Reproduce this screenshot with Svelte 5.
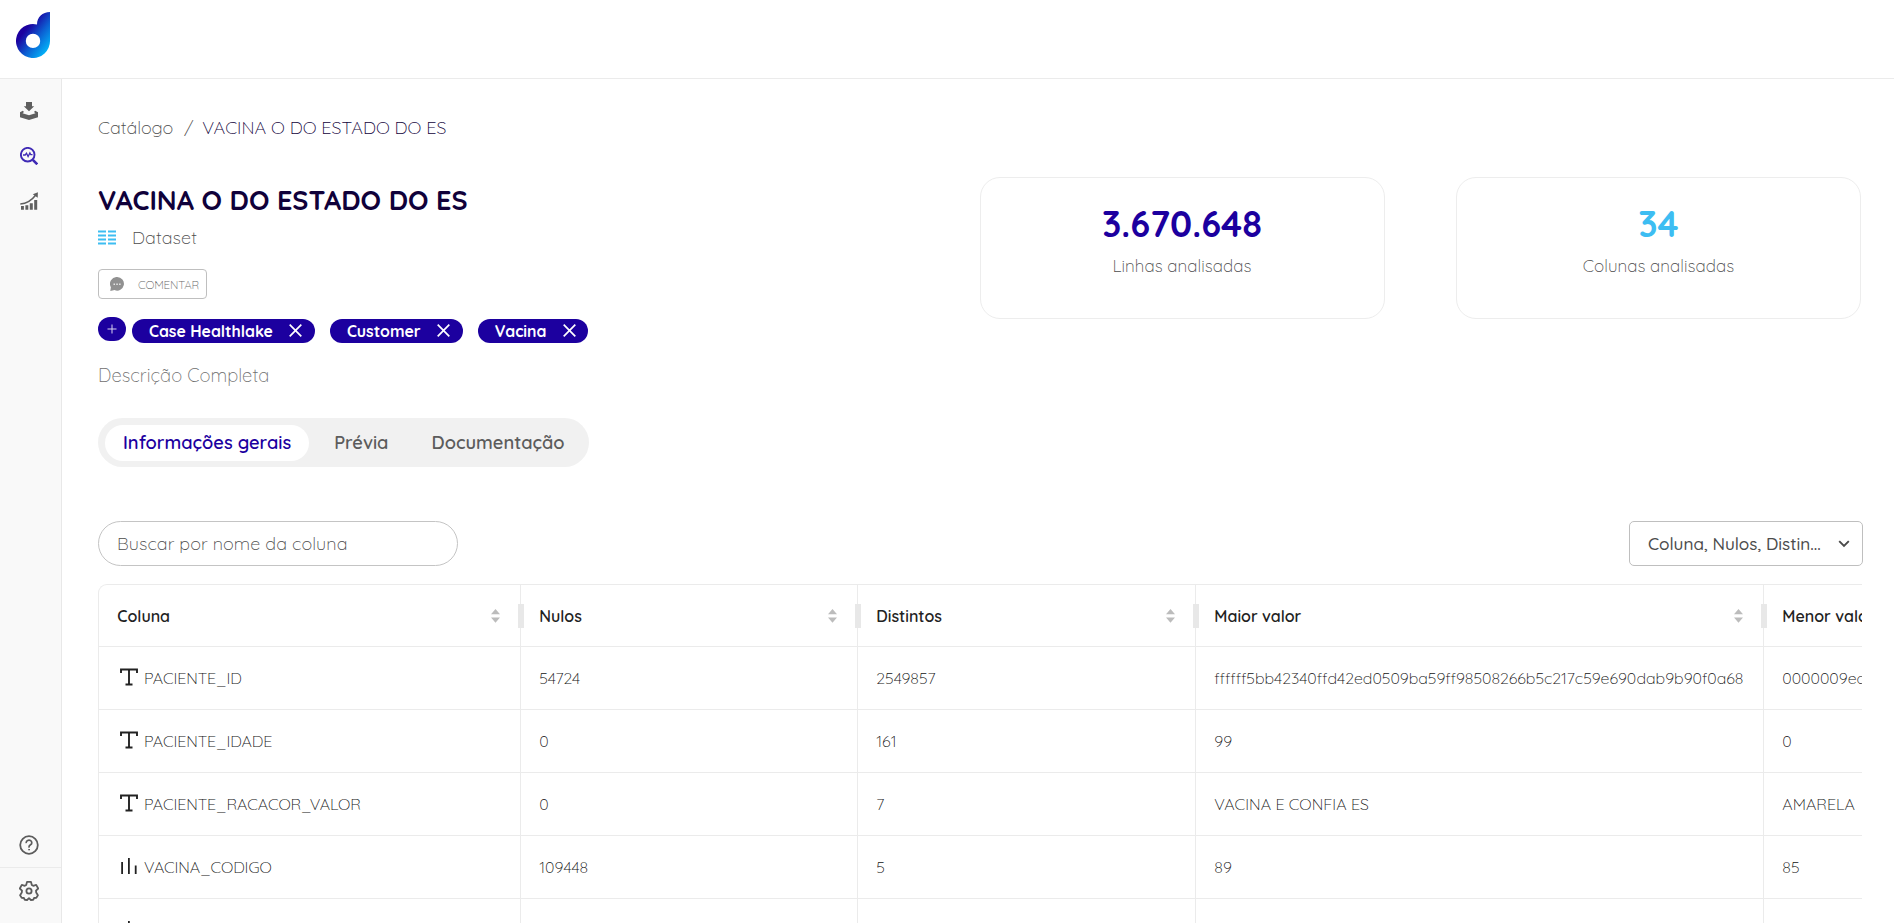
<script lang="ts">
  type Row = { kind: "text" | "number"; cells: string[] };

  const stats = [
    { value: "3.670.648", label: "Linhas analisadas", tone: "navy" },
    { value: "34", label: "Colunas analisadas", tone: "sky" },
  ];

  const headers = ["Coluna", "Nulos", "Distintos", "Maior valor", "Menor valor"];

  const rows: Row[] = [
    { kind: "text", cells: ["PACIENTE_ID", "54724", "2549857", "ffffff5bb42340ffd42ed0509ba59ff98508266b5c217c59e690dab9b90f0a68", "0000009ec"] },
    { kind: "text", cells: ["PACIENTE_IDADE", "0", "161", "99", "0"] },
    { kind: "text", cells: ["PACIENTE_RACACOR_VALOR", "0", "7", "VACINA E CONFIA ES", "AMARELA"] },
    { kind: "number", cells: ["VACINA_CODIGO", "109448", "5", "89", "85"] },
    { kind: "number", cells: ["", "", "", "", ""] },
  ];

  const tabs = ["Informações gerais", "Prévia", "Documentação"];
  let activeTab = $state(0);
  let tags = $state(["Case Healthlake", "Customer", "Vacina"]);
  let search = $state("");

  function removeTag(tag: string) {
    tags = tags.filter((t) => t !== tag);
  }
</script>

<div class="app">
  <header class="topbar">
    <svg class="logo" viewBox="0 0 34 46" width="34" height="46">
      <defs>
        <linearGradient id="brand" gradientUnits="userSpaceOnUse" x1="4" y1="22" x2="30" y2="42">
          <stop offset="0.05" stop-color="#1c009f" />
          <stop offset="0.5" stop-color="#0c5fd2" />
          <stop offset="1" stop-color="#02b8fa" />
        </linearGradient>
      </defs>
      <path
        fill="url(#brand)"
        fill-rule="evenodd"
        d="M34 0v29a17 17 0 1 1-13-16.500C21 5 26.500 0 34 0zM17 21.700a7.200 7.200 0 1 0 0 14.400 7.200 7.200 0 0 0 0-14.400z"
      />
    </svg>
  </header>

  <div class="body">
    <nav class="sidebar">
      <button class="nav" aria-label="Importar">
        <svg viewBox="0 0 18 18" width="18" height="18" fill="#5f5f5f">
          <path d="M6 0h6v4.200h2.200L9 9.200 3.800 4.200H6z" />
          <path d="M2.800 8.800 0 10.200v5L9 18l9-2.800v-5l-2.800-1.400-1.200 1.200 1.500 1.200L9 13.200l-6.500-2L4 10z" />
        </svg>
      </button>
      <button class="nav" aria-label="Catálogo">
        <svg viewBox="0 0 18 18" width="18" height="18" fill="none" stroke="#3f2ab5">
          <circle cx="7.700" cy="7.700" r="6.800" stroke-width="1.900" />
          <path d="M12.800 12.800 17.300 17.300" stroke-width="2.600" />
          <path d="M3 8h2.200l1.300-1.800 1.600 3.300L9.900 6l.9 1.700h1.700" stroke-width="1.300" />
        </svg>
      </button>
      <button class="nav" aria-label="Indicadores">
        <svg viewBox="0 0 18 18" width="18" height="18" fill="#5f5f5f">
          <path d="M1 14h2.900v3.700H1zM5.400 13.300h2.900v4.400H5.400zM9.800 11.300h3v6.400h-3zM14.200 8h3v9.700h-3z" />
          <path d="M.3 12C6.500 11.600 11.600 8.500 16 2.700" fill="none" stroke="#5f5f5f" stroke-width="1.500" />
          <path d="M12.800 2.200 17.900.2 17.700 5.700z" />
        </svg>
      </button>

      <button class="nav help" aria-label="Ajuda">
        <svg viewBox="0 0 20 20" width="20" height="20" fill="none" stroke="#5c5c5c" stroke-width="1.800" stroke-linecap="round">
          <circle cx="10" cy="10" r="8.800" />
          <path d="M7.200 7.500a2.800 2.500 0 1 1 4.300 2.300C10.400 10.500 10 10.800 10 11.900" stroke-width="1.700" />
          <circle cx="10" cy="14.700" r=".5" stroke-width="1" />
        </svg>
      </button>
      <button class="nav settings" aria-label="Configurações">
        <svg viewBox="0 0 20 20" width="20" height="20" fill="none" stroke="#5c5c5c" stroke-width="1.800" stroke-linejoin="round">
          <path d="M8 .9h4l.8 3.100 1.400.8 3-.9 2 3.600-2.200 2.200.2 1.800 1.700 2.700-1.600 2.700-2.200.1-.9 1.900-2.300.1L10 17.200 8.100 19l-2.300-.1-.9-1.900-2.200-.1-1.600-2.700 1.700-2.700.2-1.800L.8 7.500l2-3.600 3 .9L7.200 4z" />
          <circle cx="10" cy="10" r="2.600" />
        </svg>
      </button>
    </nav>

    <main>
      <div class="crumbs">
        <a href="#catalogo">Catálogo</a>
        <span class="slash">/</span>
        <span class="here">VACINA O DO ESTADO DO ES</span>
      </div>

      <section class="summary">
        <div class="about">
          <h1>VACINA O DO ESTADO DO ES</h1>

          <div class="type">
            <svg viewBox="0 0 18 15" width="18" height="15" fill="#3dbdf2">
              <path d="M0 .5h8v2H0zM0 4.500h8v2H0zM0 8.500h8v2H0zM0 12.500h8v2H0zM10 .5h8v2h-8zM10 4.500h8v2h-8zM10 8.500h8v2h-8zM10 12.500h8v2h-8z" />
            </svg>
            <span>Dataset</span>
          </div>

          <button class="comment">
            <svg viewBox="0 0 14 14" width="14" height="14">
              <path fill="#919191" d="M7.200 0a6.800 6.800 0 1 1-2.600 13.100L.3 14l.6-3.800A6.800 6.800 0 0 1 7.200 0z" />
              <path fill="#e6e6e6" d="M3.500 6.500h1.500V8H3.500zM6.300 6.500h1.500V8H6.300zM9.100 6.500h1.500V8H9.100z" />
            </svg>
            <span>COMENTAR</span>
          </button>

          <div class="tags">
            <button class="add" aria-label="Adicionar tag">
              <svg viewBox="0 0 10 10" width="10" height="10" stroke="#d9d4f0" stroke-width="1"><path d="M5 .5v9M.5 5h9" /></svg>
            </button>
            {#each tags as tag}
              <span class="tag">
                <span>{tag}</span>
                <button aria-label="Remover {tag}" onclick={() => removeTag(tag)}>
                  <svg viewBox="0 0 13 13" width="13" height="13" stroke="#fff" stroke-width="1.700"><path d="M.7.7l11.600 11.600M12.300.7.7 12.300" /></svg>
                </button>
              </span>
            {/each}
          </div>

          <p class="description">Descrição Completa</p>

          <div class="tabs">
            {#each tabs as tab, i}
              <button class:active={activeTab === i} onclick={() => (activeTab = i)}>{tab}</button>
            {/each}
          </div>
        </div>

        <div class="stats">
          {#each stats as stat}
            <div class="stat">
              <strong class={stat.tone}>{stat.value}</strong>
              <span>{stat.label}</span>
            </div>
          {/each}
        </div>
      </section>

      <div class="tools">
        <input bind:value={search} placeholder="Buscar por nome da coluna" />
        <button class="select">
          <span>Coluna, Nulos, Distin...</span>
          <svg viewBox="0 0 12 8" width="12" height="8" fill="none" stroke="#4a4a4a" stroke-width="1.900"><path d="M1.200 1.200 6 6l4.800-4.800" /></svg>
        </button>
      </div>

      <div class="grid">
        <div class="row head">
          {#each headers as header}
            <div class="cell">
              <span>{header}</span>
              <svg class="sort" viewBox="0 0 9 14" width="9" height="14" fill="#bcbcbc">
                <path d="M4.500 0 9 5.300H0zM0 8.500h9L4.500 13.800z" />
              </svg>
              <i class="resizer"></i>
            </div>
          {/each}
        </div>
        {#each rows as row}
          <div class="row">
            {#each row.cells as value, i}
              <div class="cell" class:name={i === 0}>
                {#if i === 0}
                  {#if row.kind === "text"}
                    <svg class="kind" viewBox="0 0 18 18" width="18" height="18" fill="none" stroke="#222" stroke-width="1.900">
                      <path d="M1 5V1.500h16V5M9 1.500v15M5.500 16.500h7" />
                    </svg>
                  {:else}
                    <svg class="kind" viewBox="0 0 18 18" width="18" height="18" fill="#222">
                      <path d="M1.200 5H3v12H1.200zM8 1h1.800v16H8zM14.800 8.500h1.800V17h-1.800z" />
                    </svg>
                  {/if}
                {/if}
                <span>{value}</span>
              </div>
            {/each}
          </div>
        {/each}
      </div>
    </main>
  </div>
</div>

<style>
  :global(body) {
    margin: 0;
    overflow: hidden;
  }
  * {
    box-sizing: border-box;
  }
  .app {
    display: flex;
    flex-direction: column;
    height: 100vh;
    overflow: hidden;
    background: #fff;
    color: #4c4c4c;
    font-family: Quicksand, Lato, sans-serif;
    font-size: 18px;
    font-weight: 300;
  }
  button,
  input {
    padding: 0;
    border: 0;
    background: none;
    color: inherit;
    font: inherit;
    letter-spacing: inherit;
    cursor: pointer;
  }
  svg {
    display: block;
    flex: none;
  }

  .topbar {
    flex: none;
    height: 79px;
    padding: 12px 16px;
    border-bottom: 1px solid #ebebeb;
  }
  .body {
    flex: 1;
    min-height: 0;
    display: flex;
  }

  /* sidebar */
  .sidebar {
    flex: none;
    width: 62px;
    display: flex;
    flex-direction: column;
    padding-top: 9px;
    background: #f9f9f9;
    border-right: 1px solid #e8e8e8;
  }
  .nav {
    height: 45px;
    flex: none;
    display: flex;
    align-items: center;
    padding-left: 20px;
  }
  .help {
    padding-left: 19px;
    margin-top: auto;
  }
  .settings {
    height: 56px;
    padding: 0 0 10px 19px;
    border-top: 1px solid #ebebeb;
  }

  main {
    flex: 1;
    min-width: 0;
    padding: 36px 31px 0 36px;
  }
  .crumbs {
    display: flex;
    align-items: center;
    height: 24px;
  }
  .crumbs a {
    color: inherit;
    text-decoration: none;
  }
  .slash {
    padding: 0 9px 0 11px;
  }
  .here {
    color: #10013a;
  }

  .summary {
    display: flex;
    justify-content: space-between;
    padding-top: 38px;
  }
  h1 {
    margin: 6px 0 0;
    color: #10013a;
    font-size: 27px;
    font-weight: 700;
    line-height: 34px;
  }
  .type {
    display: flex;
    align-items: center;
    gap: 16px;
    height: 24px;
    margin-top: 8px;
    letter-spacing: 0.1px;
  }
  .comment {
    display: flex;
    align-items: center;
    width: 109px;
    height: 30px;
    margin-top: 20px;
    padding-left: 11px;
    gap: 14px;
    border: 1px solid #bfbfbf;
    border-radius: 4px;
    color: #666;
    font-size: 11.600px;
    letter-spacing: -0.2px;
  }

  .tags {
    display: flex;
    gap: 15px;
    height: 26px;
    margin-top: 18px;
  }
  .add {
    width: 28px;
    height: 24px;
    margin-right: -9px;
    display: grid;
    place-items: center;
    background: #1c009f;
    border-radius: 12px;
  }
  .tag {
    display: flex;
    align-items: center;
    gap: 16.500px;
    height: 24px;
    margin-top: 2px;
    padding: 0 12.500px 1px 17px;
    background: #1c009f;
    border-radius: 12px;
    color: #fff;
    font-size: 15.800px;
    font-weight: 700;
  }

  .description {
    margin: 21px 0 0;
    color: #707070;
    font-size: 18.400px;
    line-height: 24px;
    letter-spacing: 0.05px;
  }

  .tabs {
    display: inline-flex;
    align-items: center;
    width: 491px;
    height: 49px;
    margin-top: 30px;
    padding: 0 7px;
    background: #f1f1f1;
    border-radius: 25px;
    color: #5c5c5c;
    font-size: 18.250px;
    font-weight: 600;
  }
  .tabs button {
    height: 36px;
    padding: 0 18px 1px;
    border-radius: 18px;
    white-space: nowrap;
  }
  .tabs button + button {
    margin-left: 7px;
  }
  .tabs .active {
    background: #fff;
    color: #1c009f;
  }

  .stats {
    display: flex;
    gap: 71.500px;
    margin-right: 2px;
  }
  .stat {
    display: flex;
    flex-direction: column;
    align-items: center;
    width: 405px;
    height: 142px;
    padding-top: 22px;
    border: 1px solid #ededed;
    border-radius: 20px;
    font-size: 17px;
    letter-spacing: 0.04px;
  }
  .stat strong {
    height: 44px;
    margin-bottom: 11px;
    font-size: 36px;
    font-weight: 700;
    line-height: 47px;
  }
  .navy {
    color: #1c009f;
  }
  .sky {
    color: #3dbdf2;
  }

  .tools {
    display: flex;
    justify-content: space-between;
    margin-top: 54px;
  }
  input {
    width: 360px;
    height: 45px;
    padding: 0 18px;
    border: 1px solid #c4c4c4;
    border-radius: 23px;
    letter-spacing: 0.08px;
  }
  input::placeholder {
    color: #4c4c4c;
    opacity: 1;
  }
  .select {
    display: flex;
    align-items: center;
    justify-content: space-between;
    width: 234px;
    height: 45px;
    padding: 0 12px 0 18px;
    border: 1px solid #bfbfbf;
    border-radius: 5px;
    font-size: 17.150px;
    font-weight: 500;
  }

  /* table */
  .grid {
    height: 400px;
    margin: 18px 1px 0 0;
    overflow: hidden;
    border: 1px solid #ebebeb;
    border-width: 1px 0 0 1px;
    border-top-left-radius: 9px;
    color: #111;
    font-size: 16px;
  }
  .row {
    display: grid;
    grid-template-columns: 422px 337px 338px 568px 420px;
    height: 63px;
    border-bottom: 1px solid #ebebeb;
    width: max-content;
  }
  .head {
    height: 62px;
    color: #222;
    font-weight: 600;
  }
  .cell {
    position: relative;
    display: flex;
    align-items: center;
    padding: 0 20px 0 18.300px;
    border-right: 1px solid #ebebeb;
    white-space: nowrap;
  }
  .head .cell {
    justify-content: space-between;
  }
  .name {
    letter-spacing: -0.1px;
  }
  .kind {
    margin: 0 6px 3px 2.700px;
  }
  /* drag handle sits across the column border */
  .resizer {
    position: absolute;
    right: -4px;
    top: 19px;
    z-index: 1;
    width: 6px;
    height: 24px;
    background: #e8e8e8;
  }
</style>
